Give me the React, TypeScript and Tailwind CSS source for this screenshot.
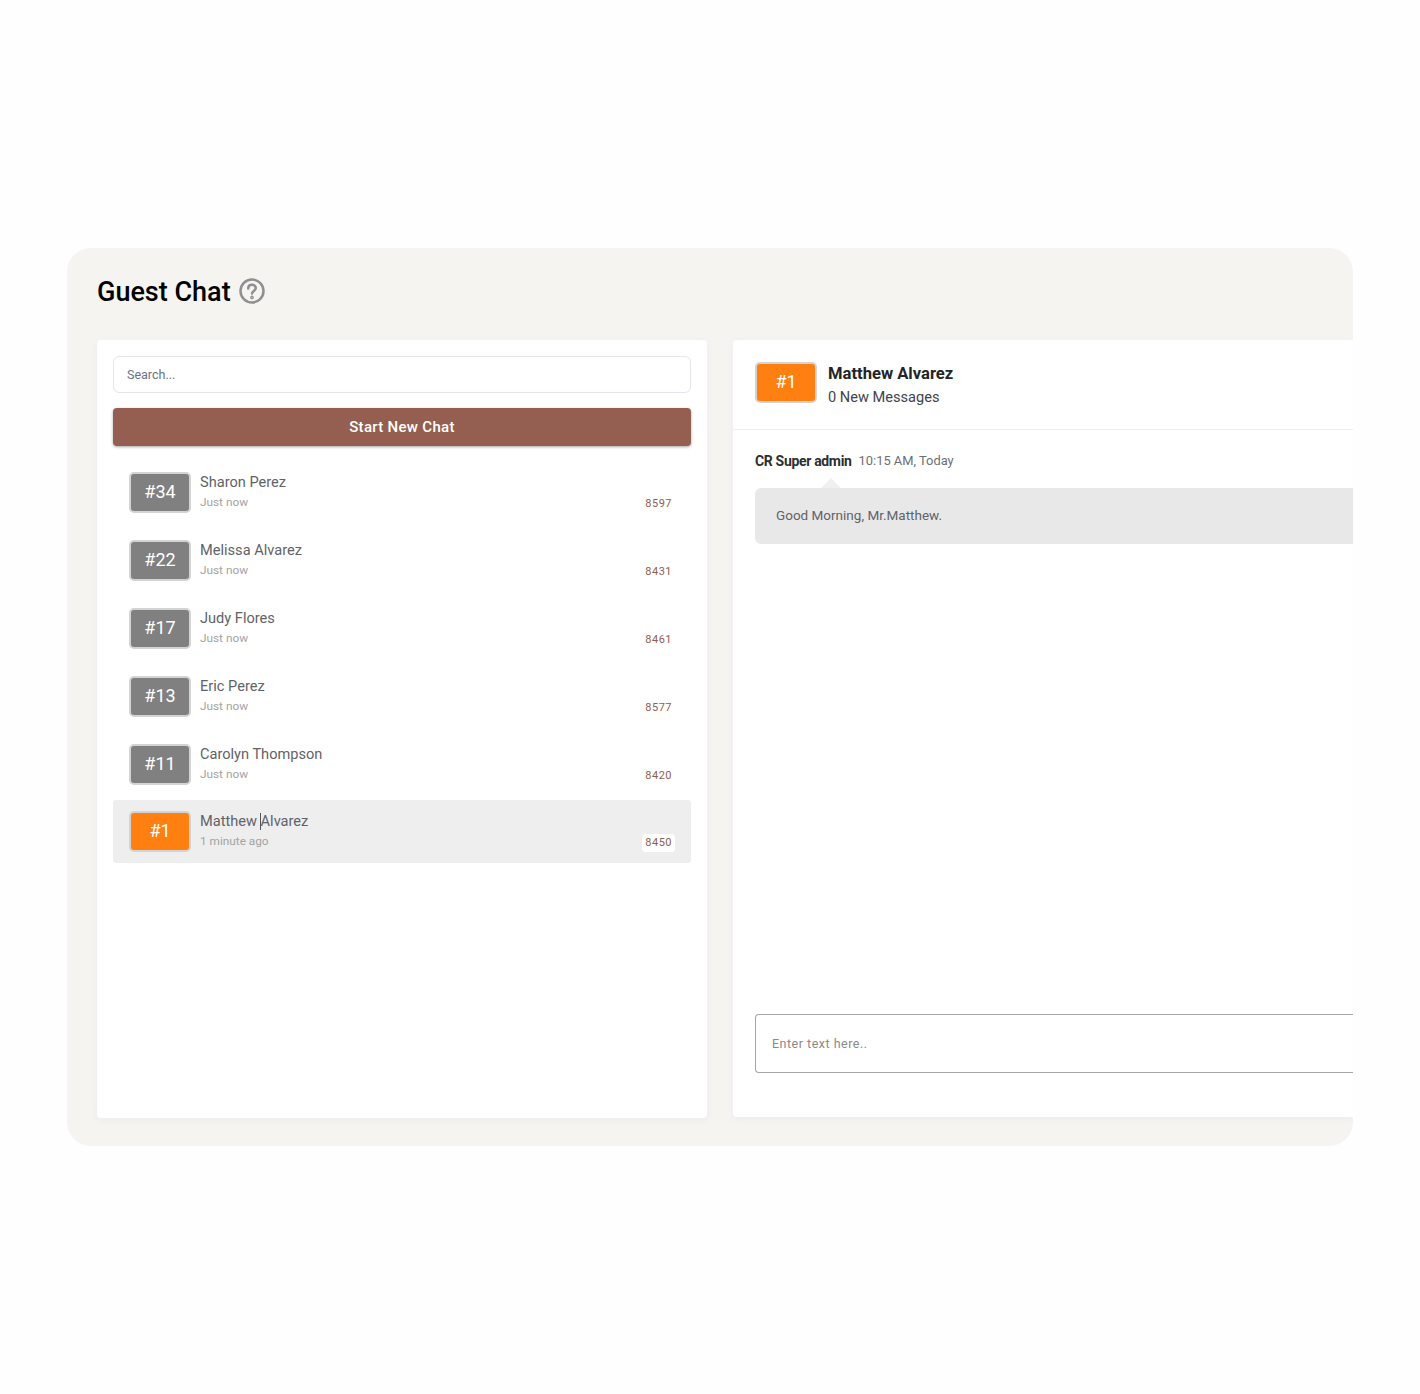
import React from 'react';

const guests = [
  { id: '#34', name: 'Sharon Perez', time: 'Just now', code: '8597' },
  { id: '#22', name: 'Melissa Alvarez', time: 'Just now', code: '8431' },
  { id: '#17', name: 'Judy Flores', time: 'Just now', code: '8461' },
  { id: '#13', name: 'Eric Perez', time: 'Just now', code: '8577' },
  { id: '#11', name: 'Carolyn Thompson', time: 'Just now', code: '8420' },
];

const HelpIcon = () => (
  <svg width="26" height="26" viewBox="0 0 26 26" fill="none" stroke="#8f8f8f" strokeWidth="2.5" strokeLinecap="round">
    <circle cx="13" cy="13" r="11.5" />
    <path d="M9.2 10.4c0-2.2 1.7-3.6 3.8-3.6s3.8 1.4 3.8 3.3c0 2.7-3.8 2.9-3.8 5.4" />
    <circle cx="13" cy="19.4" r="0.6" fill="#8f8f8f" />
  </svg>
);

const Badge = ({ label, active = false }: { label: string; active?: boolean }) => (
  <div
    className={`flex h-[41px] w-[62px] shrink-0 items-center justify-center rounded-[5px] border-2 border-[#d3d3d3] pb-[2px] text-[18px] text-white ${
      active ? 'bg-[#ff7f11]' : 'bg-[#808080]'
    }`}
  >
    {label}
  </div>
);

const GuestRow = ({ id, name, time, code }: { id: string; name: string; time: string; code: string }) => (
  <div className="flex h-[63px] items-start rounded-[3px] pl-4 pr-[19px] pt-3">
    <Badge label={id} />
    <div className="ml-[9px] flex-1">
      <div className="text-[14.6px] leading-[20px] text-[#5f6368]">{name}</div>
      <div className="text-[11.8px] leading-[20px] text-[#a3a3a3]">{time}</div>
    </div>
    <div className="mt-[24px] text-[11px] leading-[16px] tracking-[0.5px] text-[#8f5e4f]">{code}</div>
  </div>
);

export default function App() {
  return (
    <div className="min-h-[1394px] bg-[#fefefe] pl-[67px] pr-[67px] pt-[248px] font-['Roboto',sans-serif]">
      <div className="h-[898px] overflow-hidden rounded-[24px] bg-[#f5f4f1] pl-[30px] pt-[27px]">
        <div className="flex h-[32px] items-center gap-[8px]">
          <h1 className="mt-[2px] text-[27px] font-medium leading-[32px] text-black">Guest Chat</h1>
          <HelpIcon />
        </div>

        <div className="mt-[33px] flex gap-[26px]">
          {/* guest list */}
          <div className="h-[778px] w-[610px] shrink-0 rounded-[4px] bg-white px-4 pt-4 shadow-[0_2px_8px_rgba(40,50,80,0.04)]">
            <div className="flex h-[37px] items-center rounded-[6px] border border-[#e2e6ec] bg-white px-[13px] pt-[2px] text-[12.5px] text-[#6b7280]">
              Search...
            </div>
            <button className="mt-[15px] h-[38px] w-full rounded-[4px] bg-[#945f50] text-[15px] font-medium tracking-[0.3px] text-white shadow-[0_1px_3px_rgba(0,0,0,0.35)]">
              Start New Chat
            </button>

            <div className="mt-[14px] flex flex-col gap-[5px]">
              {guests.map((g) => (
                <GuestRow key={g.id} {...g} />
              ))}
              <div className="flex h-[63px] items-start rounded-[3px] bg-[#eeeeee] pl-4 pr-4 pt-[11px]">
                <Badge label="#1" active />
                <div className="ml-[9px] flex-1">
                  <div className="relative text-[14.6px] leading-[20px] text-[#5f6368]">
                    Matthew Alvarez
                    <span className="absolute left-[60px] top-[2px] h-[17px] w-px bg-[#555555]" />
                  </div>
                  <div className="text-[11.8px] leading-[20px] text-[#a3a3a3]">1 minute ago</div>
                </div>
                <div className="mt-[23px] rounded-[4px] bg-white px-[3px] py-[1px] text-[11px] leading-[16px] tracking-[0.5px] text-[#8f5e4f]">
                  8450
                </div>
              </div>
            </div>
          </div>

          {/* conversation */}
          <div className="flex h-[777px] flex-1 flex-col rounded-l-[4px] bg-white shadow-[0_2px_8px_rgba(40,50,80,0.04)]">
            <div className="flex h-[90px] items-start border-b border-[#eeeeee] pl-[22px] pt-[22px]">
              <Badge label="#1" active />
              <div className="ml-[11px]">
                <div className="text-[16.6px] font-bold leading-[24px] text-[#212529]">Matthew Alvarez</div>
                <div className="-mt-[1px] text-[14.6px] leading-[24px] text-[#3f444a]">0 New Messages</div>
              </div>
            </div>

            <div className="pl-[22px] pt-[21px]">
              <div className="flex items-center gap-[7px]">
                <span className="text-[14px] font-bold leading-[20px] tracking-[-0.33px] text-[#2b2f33]">CR Super admin</span>
                <span className="text-[12.9px] leading-[20px] text-[#6c6f78]">10:15 AM, Today</span>
              </div>
              <div className="relative mt-[17px] flex h-[56px] items-center rounded-l-[6px] bg-[#e8e8e8] pb-[2px] pl-[21px] text-[13.5px] text-[#5f6368]">
                <span className="absolute -top-[10px] left-[66px] h-0 w-0 border-x-[10px] border-b-[10px] border-x-transparent border-b-[#f0f0f0]" />
                Good Morning, Mr.Matthew.
              </div>
            </div>

            <div className="mt-[470px] pl-[22px]">
              <div className="flex h-[59px] items-center rounded-l-[4px] border border-r-0 border-[#a6a6a6] pl-4 pt-[2px] text-[12.5px] tracking-[0.5px] text-[#8a8a8a]">
                Enter text here..
              </div>
            </div>
          </div>
        </div>
      </div>
    </div>
  );
}
